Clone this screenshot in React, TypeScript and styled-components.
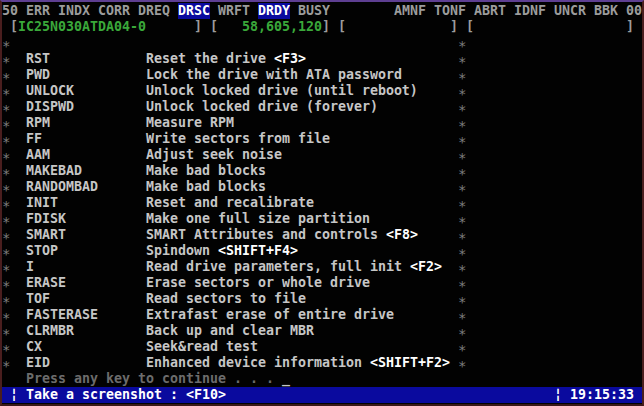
import React from "react";
import styled, { createGlobalStyle } from "styled-components";

const Global = createGlobalStyle`
  html, body { margin: 0; padding: 0; background: #000; }
  body { width: 644px; height: 406px; overflow: hidden; }
`;

const Screen = styled.div`
  box-sizing: border-box;
  width: 644px;
  height: 406px;
  background: #020202;
  border-top: 2px solid #5e3f92;
  border-left: 2px solid #4a1e1e;
  border-right: 2px solid #4a1e1e;
  border-bottom: 2px solid #3a1818;
  padding-top: 1px;
  padding-bottom: 1px;
  display: flex;
  flex-direction: column;
  font-family: "DejaVu Sans Mono", "Liberation Mono", monospace;
  font-weight: bold;
  font-size: 13.29px;
  overflow: hidden;
`;

const Row = styled.div<{ $bg?: string }>`
  height: 16px;
  line-height: 16px;
  display: grid;
  grid-template-columns: repeat(80, 8px);
  align-items: start;
  white-space: pre;
  background: ${(p) => p.$bg || "transparent"};
`;

const Cell = styled.span<{ $col: number; $len: number; $color?: string; $bg?: string }>`
  grid-column: ${(p) => p.$col + 1} / span ${(p) => p.$len};
  color: ${(p) => p.$color || "#c4c4c4"};
  background: ${(p) => p.$bg || "transparent"};
  overflow: visible;
`;

const Star = styled.span<{ $col: number }>`
  grid-column: ${(p) => p.$col + 1} / span 1;
  color: #7c7c7c;
  font-weight: normal;
  font-size: 14px;
  line-height: 23px;
  height: 16px;
  text-align: center;
`;

const C = {
  label: "#9c9c9c",
  text: "#c6c6c6",
  green: "#3aa83a",
  white: "#ffffff",
  dim: "#6c6c6c",
  blue: "#0a0a9e",
};

const T: React.FC<{ col: number; text: string; color?: string; bg?: string }> = ({ col, text, color, bg }) => (
  <Cell $col={col} $len={text.length} $color={color} $bg={bg}>
    {text}
  </Cell>
);

const header: [number, string, boolean?][] = [
  [0, "50"],
  [3, "ERR"],
  [7, "INDX"],
  [12, "CORR"],
  [17, "DREQ"],
  [22, "DRSC", true],
  [27, "WRFT"],
  [32, "DRDY", true],
  [37, "BUSY"],
  [49, "AMNF"],
  [54, "TONF"],
  [59, "ABRT"],
  [64, "IDNF"],
  [69, "UNCR"],
  [74, "BBK"],
  [78, "00"],
];

const commands: [string, string, string?][] = [
  ["RST", "Reset the drive ", "<F3>"],
  ["PWD", "Lock the drive with ATA password"],
  ["UNLOCK", "Unlock locked drive (until reboot)"],
  ["DISPWD", "Unlock locked drive (forever)"],
  ["RPM", "Measure RPM"],
  ["FF", "Write sectors from file"],
  ["AAM", "Adjust seek noise"],
  ["MAKEBAD", "Make bad blocks"],
  ["RANDOMBAD", "Make bad blocks"],
  ["INIT", "Reset and recalibrate"],
  ["FDISK", "Make one full size partition"],
  ["SMART", "SMART Attributes and controls ", "<F8>"],
  ["STOP", "Spindown ", "<SHIFT+F4>"],
  ["I", "Read drive parameters, full init ", "<F2>"],
  ["ERASE", "Erase sectors or whole drive"],
  ["TOF", "Read sectors to file"],
  ["FASTERASE", "Extrafast erase of entire drive"],
  ["CLRMBR", "Back up and clear MBR"],
  ["CX", "Seek&read test"],
  ["EID", "Enhanced device information ", "<SHIFT+F2>"],
];

export default function App() {
  return (
    <>
      <Global />
      <Screen>
        <Row>
          {header.map(([col, t, hl]) => (
            <T key={t} col={col} text={t} color={hl ? C.white : C.label} bg={hl ? C.blue : undefined} />
          ))}
        </Row>
        <Row>
          <T col={1} text="[" color={C.label} />
          <T col={2} text="IC25N030ATDA04-0" color={C.green} />
          <T col={24} text="]" color={C.label} />
          <T col={26} text="[" color={C.label} />
          <T col={30} text="58,605,120" color={C.green} />
          <T col={40} text="]" color={C.label} />
          <T col={42} text="[" color={C.label} />
          <T col={56} text="]" color={C.label} />
          <T col={58} text="[" color={C.label} />
          <T col={78} text="]" color={C.label} />
        </Row>
        <Row>
          <Star $col={0}>*</Star>
          <Star $col={57}>*</Star>
        </Row>
        {commands.map(([cmd, desc, key]) => (
          <Row key={cmd + desc}>
            <Star $col={0}>*</Star>
            <T col={3} text={cmd} color={C.text} />
            <T col={18} text={desc} color={C.text} />
            {key && <T col={18 + desc.length} text={key} color={C.white} />}
            <Star $col={57}>*</Star>
          </Row>
        ))}
        <Row>
          <T col={3} text="Press any key to continue . . ." color={C.dim} />
          <T col={35} text="_" color={C.text} />
        </Row>
        <Row $bg={C.blue}>
          <T col={1} text="¦" color={C.white} />
          <T col={3} text="Take a screenshot : <F10>" color={C.white} />
          <T col={69} text="¦" color={C.white} />
          <T col={71} text="19:15:33" color={C.white} />
        </Row>
      </Screen>
    </>
  );
}
